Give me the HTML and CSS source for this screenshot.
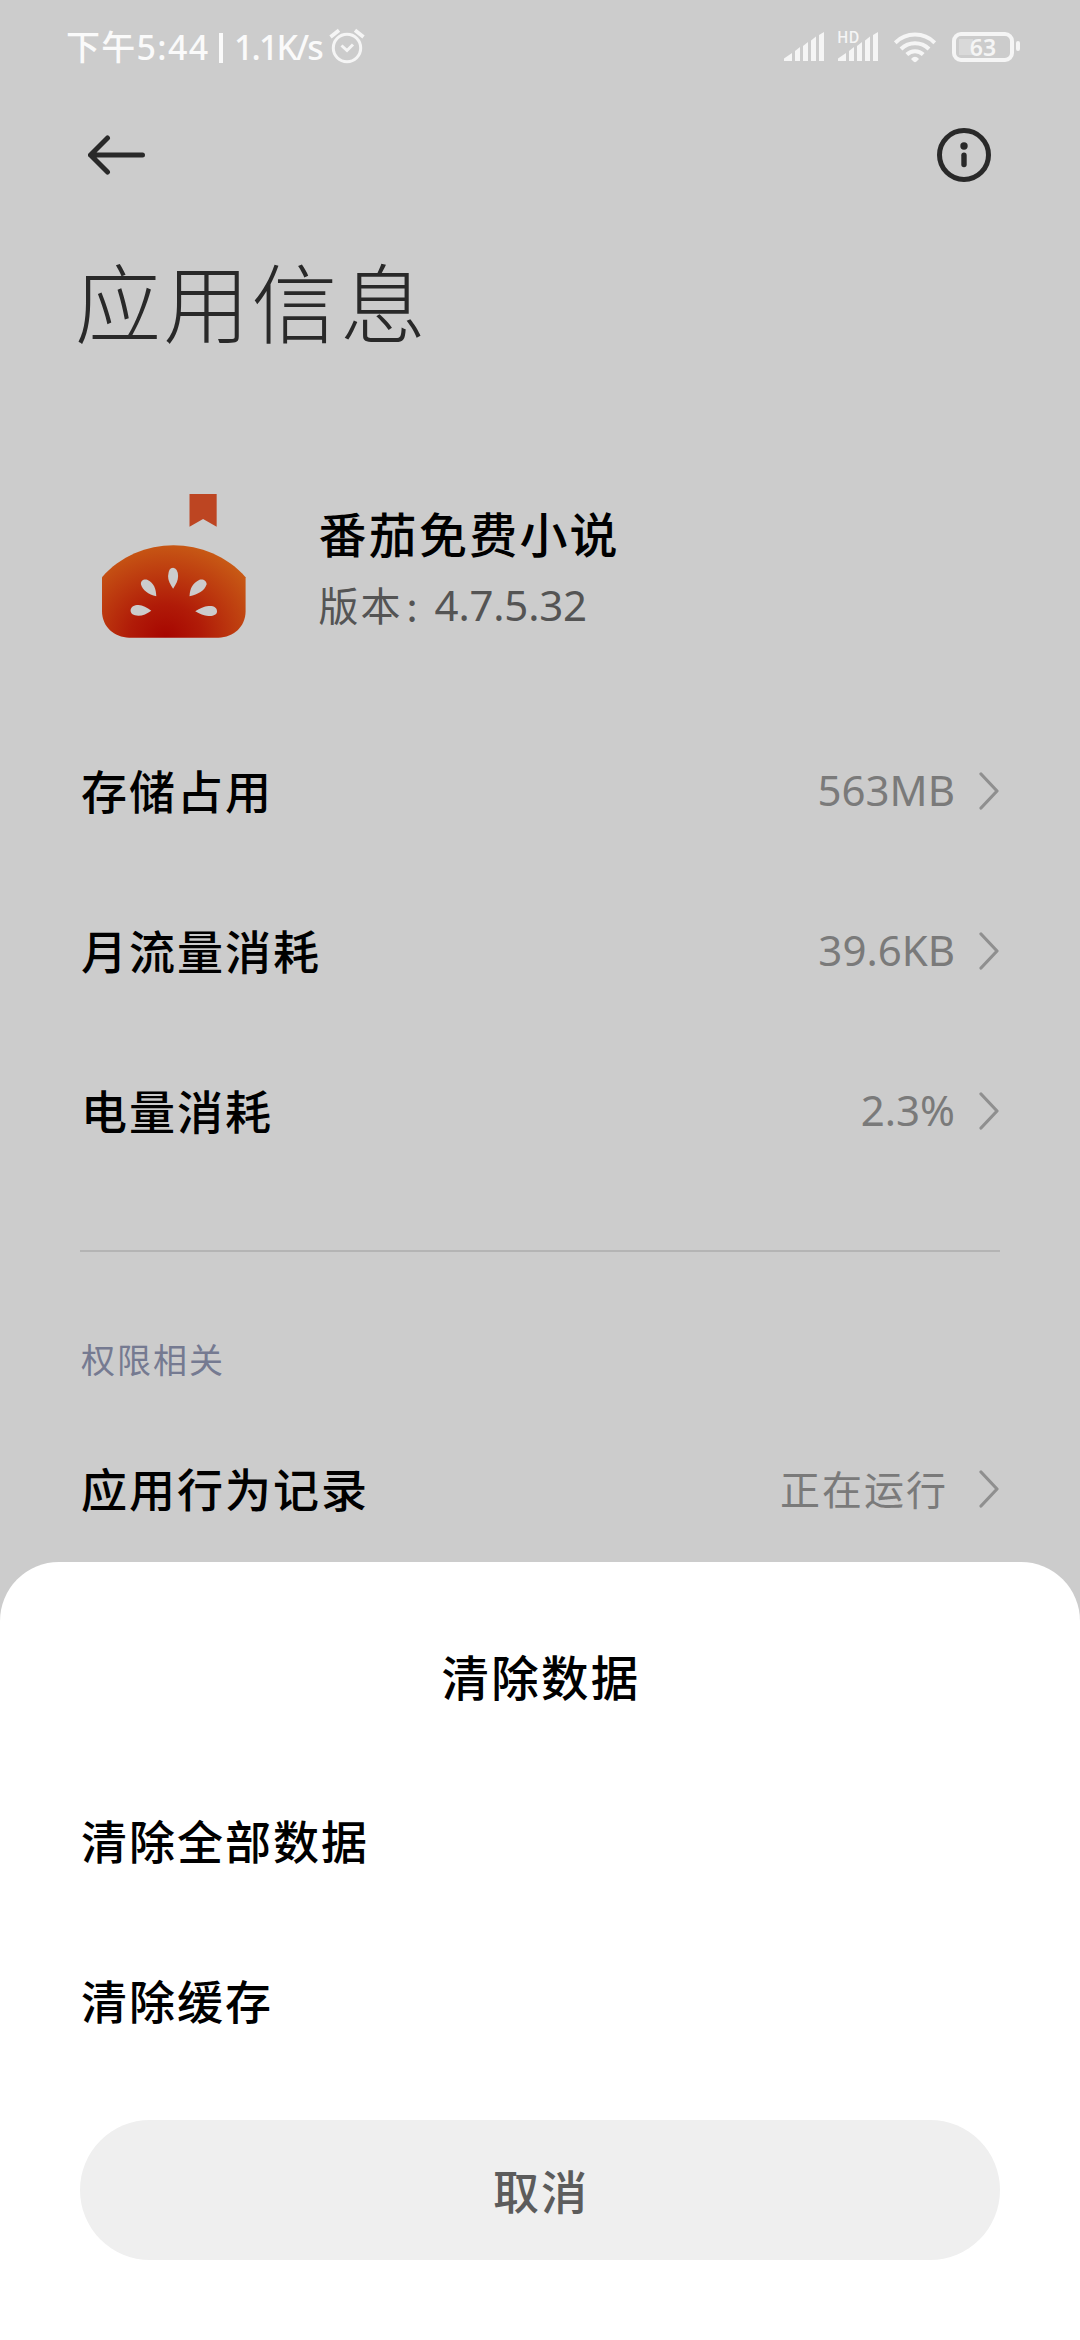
FILE: index.html
```html
<!DOCTYPE html>
<html lang="zh-CN">
<head>
<meta charset="utf-8">
<title>应用信息</title>
<link rel="stylesheet" href="styles.css">
</head>
<body>
<div class="screen">
  <main class="page">
    <div class="status">
      <div class="status-left">
        <span class="clock">下午5:44</span><span class="bar"></span><span class="speed">1.1K/s</span>
        <svg class="alarm" width="36" height="36" viewBox="0 0 36 36"><g fill="none" stroke="#f5f5f5" stroke-width="3"><circle cx="18" cy="20" r="13.7"/><path d="M12.5 17.5 18 22.5 24 16.5"/><path d="M1.5 9 10 2.3M26 2.3 34.5 9" stroke-width="3.8"/></g></svg>
      </div>
      <div class="status-right">
        <svg width="40" height="30" viewBox="0 0 40 30" fill="#f5f5f5"><path d="M0 29V26.5L8 21V29zM11 29V19l5-4V29zM19 29V14l5-4V29zM27 29V8.500l5-4V29zM35 29V3l5-3V29z"/></svg>
        <div class="sim">
          <svg width="40" height="30" viewBox="0 0 40 30" fill="#f5f5f5"><path d="M0 29V26.500L8 21V29zM11 29V19l5-4V29zM19 29V14l5-4V29zM27 29V8.500l5-4V29zM35 29V3l5-3V29z"/></svg>
          <span class="hd">HD</span>
        </div>
        <svg class="wifi" width="42" height="31" viewBox="0 0 42 31"><g fill="none" stroke="#f5f5f5" stroke-width="4"><path d="M1.200 10.800A28 28 0 0 1 40.800 10.800"/><path d="M7 17A20 20 0 0 1 35 17"/><path d="M12.800 22.500A11.800 11.800 0 0 1 29.200 22.500"/></g><path d="M17 27Q21 22.500 25 27L22.500 29.500Q21 31 19.500 29.500Z" fill="#f5f5f5"/></svg>
        <div class="battery"><span>63</span></div><i class="nub"></i>
      </div>
    </div>

    <header class="toolbar">
      <svg width="58" height="40" viewBox="0 0 58 40"><path d="M19.500 3 2.500 20 19.500 37M2.500 20H54.500" fill="none" stroke="#292929" stroke-width="5" stroke-linecap="round" stroke-linejoin="round"/></svg>
      <svg width="54" height="54" viewBox="0 0 54 54"><circle cx="27" cy="27" r="24.500" fill="none" stroke="#292929" stroke-width="5"/><circle cx="27" cy="18" r="3.700" fill="#292929"/><path d="M27 27.300v9.200" stroke="#292929" stroke-width="5.400" stroke-linecap="round"/></svg>
    </header>

    <h1 class="title">应用信息</h1>

    <section class="app">
      <svg class="logo" width="143.6" height="144" viewBox="62 72 402 432" preserveAspectRatio="none">
        <defs><radialGradient id="flesh" gradientUnits="userSpaceOnUse" cx="240" cy="505" r="290"><stop offset="0" stop-color="#a60500"/><stop offset=".35" stop-color="#b01b08"/><stop offset=".68" stop-color="#bd3b0f"/><stop offset="1" stop-color="#c85a15"/></radialGradient></defs>
        <path d="M307 72H383V170L345 147 307 170Z" fill="#bd4522"/>
        <path d="M62 322C165 194 359 194 464 322V424C464 470 430 503 388 503H138C96 503 62 470 62 424Z" fill="url(#flesh)"/>
        <g fill="#ccc">
          <path d="M261 356C252 342 247 332 247 318Q248 293 261 293 274 294 275 318C275 332 270 342 261 356Z"/>
          <path d="M214 379C191 373 176 362 171 343 170 332 179 326 190 330 207 339 213 355 214 379Z"/>
          <path d="M307 379C308 355 315 340 335 329 346 326 355 333 355 343 349 363 331 373 307 379Z"/>
          <path d="M200 422C188 431 176 437 164 437 149 437 142 431 142 421 143 410 152 405 164 405 176 406 188 413 200 422Z"/>
          <path d="M323 424C336 415 348 409 360 408 376 407 384 413 384 424 384 435 373 439 360 438 347 437 335 432 323 424Z"/>
        </g>
      </svg>
      <div class="app-text">
        <div class="app-name">番茄免费小说</div>
        <div class="app-version">版本<span class="colon">:</span><span class="num">4.7.5.32</span></div>
      </div>
    </section>

    <ul class="list">
      <li class="row"><span class="label">存储占用</span><span class="value">563MB</span><svg class="chev" viewBox="0 0 20 38"><path d="M2 2 18 19 2 36"/></svg></li>
      <li class="row"><span class="label">月流量消耗</span><span class="value">39.6KB</span><svg class="chev" viewBox="0 0 20 38"><path d="M2 2 18 19 2 36"/></svg></li>
      <li class="row"><span class="label">电量消耗</span><span class="value">2.3%</span><svg class="chev" viewBox="0 0 20 38"><path d="M2 2 18 19 2 36"/></svg></li>
    </ul>

    <div class="divider"></div>
    <h2 class="group">权限相关</h2>
    <div class="row"><span class="label">应用行为记录</span><span class="value cjk">正在运行</span><svg class="chev" viewBox="0 0 20 38"><path d="M2 2 18 19 2 36"/></svg></div>
  </main>

  <section class="sheet">
    <h2 class="sheet-title">清除数据</h2>
    <div class="row"><span class="label">清除全部数据</span></div>
    <div class="row"><span class="label">清除缓存</span></div>
    <button class="cancel">取消</button>
  </section>
</div>
</body>
</html>
```
FILE: styles.css
```css
* { box-sizing: border-box; }
body { margin: 0; background: #ccc; font-family: "Noto Sans CJK SC", sans-serif; color: #000; }
h1, h2, ul { margin: 0; padding: 0; list-style: none; }
svg { display: block; flex: none; }
.screen { width: 1080px; height: 2340px; display: flex; flex-direction: column; background: #ccc; overflow: hidden; }
.page { height: 1562px; flex: none; display: flex; flex-direction: column; }

.status { height: 94px; padding: 0 60px 0 66px; display: flex; justify-content: space-between; align-items: center; color: #fafafa; flex: none; }
.status-left { display: flex; align-items: center; font-family: "Noto Sans", "Noto Sans CJK SC", sans-serif; font-size: 34px; font-weight: 500; line-height: 50px; height: 50px; white-space: nowrap; padding-bottom: 1px; }
.clock { width: 153px; letter-spacing: 1.300px; }
.bar { width: 4px; height: 30px; background: #fafafa; margin-top: 2px; }
.speed { width: 95px; margin-left: 11px; letter-spacing: -1.900px; }
.alarm { margin-bottom: 1px; }
.status-right { display: flex; align-items: center; }
.sim { position: relative; margin-left: 14px; }
.hd { position: absolute; left: -1px; top: -6px; font-size: 15.500px; line-height: 20px; font-weight: 500; color: #f5f5f5; }
.wifi { margin-left: 16px; }
.battery { width: 62px; height: 30px; margin-left: 16px; border: 4px solid #f5f5f5; border-radius: 9px; display: flex; align-items: center; justify-content: center; font-family: "Noto Sans", sans-serif; font-size: 23px; line-height: 22px; font-weight: 600; color: #f5f5f5; background: linear-gradient(#d9d9d9, #d9d9d9) 3px 3px / 14px 16px no-repeat; }
.nub { width: 4px; height: 10px; margin: 0 0 2px 2px; border-radius: 2px; background: #f5f5f5; }

.toolbar { height: 122px; padding: 0 89px 0 88px; display: flex; align-items: center; justify-content: space-between; flex: none; }
.title { height: 170px; padding-left: 75px; font-size: 86px; line-height: 168px; font-weight: 300; letter-spacing: 2.300px; color: #292929; flex: none; }

.app { height: 290px; padding: 108px 80px 0 102px; display: flex; align-items: flex-start; flex: none; }
.app-text { margin-left: 73px; margin-top: 3px; }
.app-name { font-size: 48px; line-height: 70px; font-weight: 500; letter-spacing: 2.200px; }
.app-version { font-size: 40px; line-height: 70px; margin-top: 2px; letter-spacing: 2px; color: #545454; display: flex; }
.colon { width: 32px; padding-left: 4px; }
.num { font-family: "Noto Sans", sans-serif; font-size: 42px; letter-spacing: -.2px; padding-top: 1px; }

.list { margin-top: 35px; }
.row { height: 160px; padding: 0 81px 0 81px; display: flex; align-items: center; flex: none; }
.label { flex: 1; font-size: 46px; line-height: 68px; font-weight: 500; letter-spacing: 2px; padding-bottom: 5px; }
.value { font-family: "Noto Sans", "Noto Sans CJK SC", sans-serif; font-size: 42px; line-height: 60px; color: #7a7a7a; padding-bottom: 2px; margin-right: 24px; }
.cjk { font-family: "Noto Sans CJK SC", sans-serif; font-size: 40px; letter-spacing: 2px; margin-right: 31px; padding-bottom: 3px; }
.chev { width: 20px; height: 38px; fill: none; stroke: #8f8f8f; stroke-width: 3.200; stroke-linecap: round; stroke-linejoin: round; }
.divider { height: 2px; margin: 59px 80px 0; background: #b4b4b4; flex: none; }
.group { height: 157px; padding: 82px 81px 0; font-size: 34px; line-height: 50px; font-weight: 400; letter-spacing: 2px; color: #757a91; flex: none; }

.sheet { height: 778px; flex: none; background: #fff; border-radius: 59px 59px 0 0; display: flex; flex-direction: column; }
.sheet-title { height: 199px; padding: 79px 0 0 2px; text-align: center; font-size: 47.500px; line-height: 70px; font-weight: 500; letter-spacing: 2.200px; }
.cancel { width: 920px; height: 140px; margin: 39px 80px 0; padding: 0 0 3px 2px; border: 0; border-radius: 70px; background: #efefef; color: #5c5c5c; font: 500 46px/68px "Noto Sans CJK SC", sans-serif; letter-spacing: 2px; }
```
